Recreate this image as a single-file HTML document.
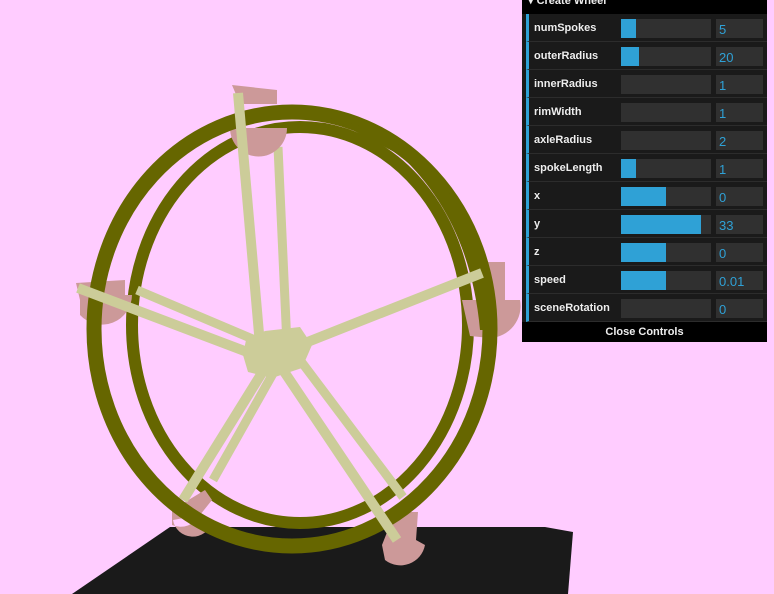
<!DOCTYPE html>
<html><head><meta charset="utf-8"><style>
html,body{margin:0;padding:0;width:774px;height:594px;overflow:hidden;background:#ffccff;font-family:"Liberation Sans",sans-serif;}
svg{position:absolute;left:0;top:0}
#gui{position:absolute;left:522px;top:0;width:245px;background:#1a1a1a;}
.title{height:14px;background:#000;color:#eee;font-size:11px;font-weight:bold;line-height:2px;padding-left:6px;overflow:hidden}
.row{position:relative;height:27px;border-bottom:1px solid #2c2c2c;border-left:3px solid #2fa1d6;margin-left:4px;}
.row .l{position:absolute;left:5px;top:1px;line-height:27px;color:#eee;font-size:11px;font-weight:bold;text-shadow:0 -1px 0 #111}
.row .s{position:absolute;left:92px;top:5px;width:90px;height:19px;background:#303030}
.row .s i{display:block;height:100%;background:#2fa1d6}
.row .n{position:absolute;left:187px;top:5px;width:47px;height:19px;background:#303030;color:#2fa1d6;font-size:13px;line-height:22px;padding-left:3px;box-sizing:border-box}
.close{height:20px;background:#000;color:#eee;font-size:11px;font-weight:bold;text-align:center;line-height:20px}
</style></head><body>
<svg width="774" height="594" viewBox="0 0 774 594">
<polygon points="170,527 545,527 573,532 568,594 72,594" fill="#1a1a1a"/>
<ellipse cx="300" cy="325" rx="168" ry="198" fill="none" stroke="#666600" stroke-width="12"/>
<g stroke="#cccc99" stroke-width="9" fill="none">
<line x1="287" y1="345" x2="278" y2="147"/>
<line x1="300" y1="360" x2="403" y2="497"/>
<line x1="275" y1="370" x2="213" y2="480"/>
<line x1="255" y1="340" x2="137" y2="290"/>
</g>
<g fill="#cc9999">
<path d="M232,85 L277,90 L277,104 L240,104Z"/><path d="M230,128 L287,128 A28,28 0 0 1 230,128Z"/>
<path d="M485,262 L505,262 L505,300 L520,300 A32,32 0 0 1 490,338 L470,336 L462,300 L485,300Z"/>
<path d="M76,283 L125,280 L125,295 L132,295 A30,30 0 0 1 80,315 L80,300Z"/>
<path d="M172,510 L205,490 L212,500 L200,515 A22,22 0 0 1 172,525Z M173,520 A20,20 0 0 0 212,522 L200,515Z"/>
<path d="M395,512 L418,512 L416,540 L425,545 A25,25 0 0 1 385,560 L382,545Z"/>
</g>
<ellipse cx="292" cy="329" rx="198" ry="217" fill="none" stroke="#666600" stroke-width="15"/>
<path d="M330,118 Q440,140 478,250 L494,330 L480,330 Q470,220 400,155Z" fill="#666600"/>
<g stroke="#cccc99" stroke-width="10" fill="none">
<line x1="260" y1="345" x2="238" y2="93"/>
<line x1="300" y1="345" x2="482" y2="273"/>
<line x1="283" y1="370" x2="397" y2="540"/>
<line x1="265" y1="368" x2="183" y2="500"/>
<line x1="255" y1="355" x2="78" y2="288"/>
</g>
<polygon points="246,340 265,331 300,327 312,345 302,368 272,378 248,372 243,355" fill="#cccc99"/>
</svg>
<div id="gui">
<div class="title">▾ Create Wheel</div>
<div class="row"><span class="l">numSpokes</span><div class="s"><i style="width:15px"></i></div><div class="n">5</div></div>
<div class="row"><span class="l">outerRadius</span><div class="s"><i style="width:18px"></i></div><div class="n">20</div></div>
<div class="row"><span class="l">innerRadius</span><div class="s"><i style="width:0"></i></div><div class="n">1</div></div>
<div class="row"><span class="l">rimWidth</span><div class="s"><i style="width:0"></i></div><div class="n">1</div></div>
<div class="row"><span class="l">axleRadius</span><div class="s"><i style="width:0"></i></div><div class="n">2</div></div>
<div class="row"><span class="l">spokeLength</span><div class="s"><i style="width:15px"></i></div><div class="n">1</div></div>
<div class="row"><span class="l">x</span><div class="s"><i style="width:45px"></i></div><div class="n">0</div></div>
<div class="row"><span class="l">y</span><div class="s"><i style="width:80px"></i></div><div class="n">33</div></div>
<div class="row"><span class="l">z</span><div class="s"><i style="width:45px"></i></div><div class="n">0</div></div>
<div class="row"><span class="l">speed</span><div class="s"><i style="width:45px"></i></div><div class="n">0.01</div></div>
<div class="row"><span class="l">sceneRotation</span><div class="s"><i style="width:0"></i></div><div class="n">0</div></div>
<div class="close">Close Controls</div>
</div>
</body></html>
